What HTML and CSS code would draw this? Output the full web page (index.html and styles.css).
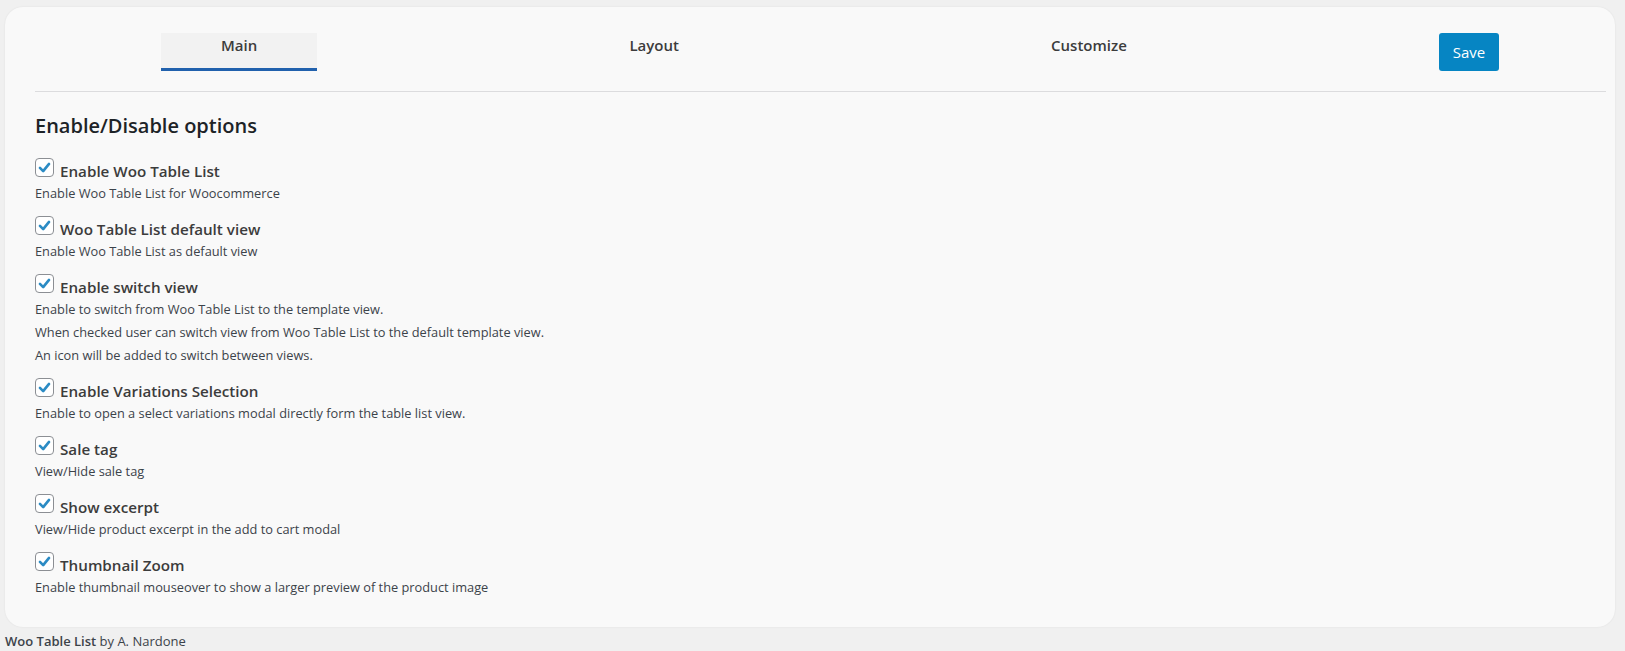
FILE: index.html
```html
<!DOCTYPE html>
<html lang="en">
<head>
<meta charset="utf-8">
<title>Woo Table List</title>
<link rel="stylesheet" href="styles.css">
</head>
<body>
<div class="wrap">
  <div class="card">
    <div class="nav">
      <div class="tab active">Main</div>
      <div class="tab">Layout</div>
      <div class="tab">Customize</div>
      <button class="save">Save</button>
    </div>
    <div class="rule"></div>
    <h2 class="heading">Enable/Disable options</h2>

    <div class="option">
      <div class="label-row"><span class="cb"><svg viewBox="0 0 18 18"><path d="M4.2 9.4 L7.6 12.8 L13.8 5.2"/></svg></span><span class="label">Enable Woo Table List</span></div>
      <p class="desc">Enable Woo Table List for Woocommerce</p>
    </div>

    <div class="option">
      <div class="label-row"><span class="cb"><svg viewBox="0 0 18 18"><path d="M4.2 9.4 L7.6 12.8 L13.8 5.2"/></svg></span><span class="label">Woo Table List default view</span></div>
      <p class="desc">Enable Woo Table List as default view</p>
    </div>

    <div class="option">
      <div class="label-row"><span class="cb"><svg viewBox="0 0 18 18"><path d="M4.2 9.4 L7.6 12.8 L13.8 5.2"/></svg></span><span class="label">Enable switch view</span></div>
      <p class="desc">Enable to switch from Woo Table List to the template view.</p>
      <p class="desc">When checked user can switch view from Woo Table List to the default template view.</p>
      <p class="desc">An icon will be added to switch between views.</p>
    </div>

    <div class="option">
      <div class="label-row"><span class="cb"><svg viewBox="0 0 18 18"><path d="M4.2 9.4 L7.6 12.8 L13.8 5.2"/></svg></span><span class="label">Enable Variations Selection</span></div>
      <p class="desc">Enable to open a select variations modal directly form the table list view.</p>
    </div>

    <div class="option">
      <div class="label-row"><span class="cb"><svg viewBox="0 0 18 18"><path d="M4.2 9.4 L7.6 12.8 L13.8 5.2"/></svg></span><span class="label">Sale tag</span></div>
      <p class="desc">View/Hide sale tag</p>
    </div>

    <div class="option">
      <div class="label-row"><span class="cb"><svg viewBox="0 0 18 18"><path d="M4.2 9.4 L7.6 12.8 L13.8 5.2"/></svg></span><span class="label">Show excerpt</span></div>
      <p class="desc">View/Hide product excerpt in the add to cart modal</p>
    </div>

    <div class="option">
      <div class="label-row"><span class="cb"><svg viewBox="0 0 18 18"><path d="M4.2 9.4 L7.6 12.8 L13.8 5.2"/></svg></span><span class="label">Thumbnail Zoom</span></div>
      <p class="desc">Enable thumbnail mouseover to show a larger preview of the product image</p>
    </div>
  </div>
  <div class="footer"><strong>Woo Table List</strong> by A. Nardone</div>
</div>
</body>
</html>
```

FILE: styles.css
```css
html, body {
  margin: 0;
  padding: 0;
}
body {
  background: #f0f0f0;
  font-family: "Open Sans", "Noto Sans", sans-serif;
  color: #3c434a;
}
.wrap {
  padding: 7px 10px 0 5px;
}
.card {
  background: #f9f9f9;
  border-radius: 18px;
  box-shadow: 0 0 2px rgba(0, 0, 0, 0.08);
  padding: 26px 9px 15px 30px;
}
.nav {
  display: flex;
  justify-content: space-between;
  align-items: flex-start;
  padding: 0 107px 0 126px;
}
.tab {
  box-sizing: content-box;
  height: 33px;
  padding: 2px 60px 0;
  font-size: 15px;
  font-weight: 600;
  line-height: 20px;
  color: #3c3c3c;
  border-bottom: 3px solid transparent;
}
.tab.active {
  background: #f2f2f2;
  border-bottom-color: #2161ad;
}
.save {
  width: 60px;
  height: 38px;
  background: #0685c3;
  color: #fff;
  border: 0;
  border-radius: 3px;
  font-family: inherit;
  font-size: 15px;
  padding: 0;
}
.rule {
  height: 1px;
  background: #dcdcde;
  margin-top: 20px;
}
.heading {
  margin: 20px 0 20px;
  font-size: 20px;
  font-weight: 600;
  line-height: 28px;
  color: #1d2327;
}
.option {
  margin-bottom: 13px;
}
.label-row {
  display: flex;
  align-items: flex-start;
  height: 22px;
}
.cb {
  width: 17px;
  height: 17px;
  margin-top: -2px;
  margin-right: 6px;
  border: 1px solid #8c8f94;
  border-radius: 4px;
  background: #fff;
  display: flex;
}
.cb svg {
  width: 17px;
  height: 17px;
  fill: none;
  stroke: #2b8bc4;
  stroke-width: 2.8;
  stroke-linecap: round;
  stroke-linejoin: round;
}
.label {
  font-size: 15.2px;
  font-weight: 600;
  line-height: 22px;
  color: #3c3c3c;
}
.desc {
  margin: 0;
  font-size: 12.8px;
  line-height: 23px;
  color: #3c434a;
}
.footer {
  padding-top: 4px;
  font-size: 13px;
  line-height: 20px;
  color: #3c434a;
}
.footer strong {
  font-weight: 600;
}
```
